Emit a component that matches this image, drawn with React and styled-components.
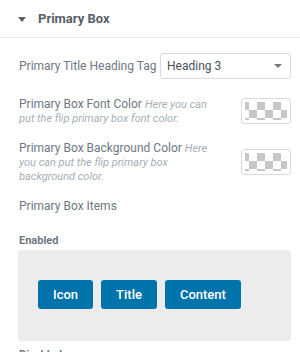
import React from "react"
import styled, { createGlobalStyle } from "styled-components"

const GlobalStyle = createGlobalStyle`
    body {
        margin: 0;
        background: #fff;
        font-family: Roboto, "Liberation Sans", Arial, sans-serif;
    }
`

const Panel = styled.div`
    width: 300px;
    height: 352px;
    overflow: hidden;
`

const SectionHeader = styled.div`
    height: 37px;
    display: flex;
    align-items: center;
    padding-left: 18px;
    border-bottom: 1px solid #e6e9ec;
`

const Caret = styled.span`
    width: 0;
    height: 0;
    border-left: 4px solid transparent;
    border-right: 4px solid transparent;
    border-top: 5px solid #556068;
    margin-right: 12px;
    margin-top: 1px;
`

const SectionTitle = styled.span`
    font-size: 13px;
    font-weight: 700;
    color: #556068;
`

const Body = styled.div`
    padding: 0 9px 0 18px;
`

const Row = styled.div`
    display: flex;
    align-items: center;
    justify-content: space-between;
    margin-top: ${p => p.$gap}px;
`

const Label = styled.div`
    font-size: 12px;
    line-height: 14px;
    color: #6d7882;
    padding-left: 1px;
    width: ${p => p.$width || "auto"};
`

const Hint = styled.i`
    font-size: 11px;
    line-height: 1;
    color: #a4afb7;
`

const Select = styled.div`
    box-sizing: border-box;
    width: 131px;
    height: 26px;
    border: 1px solid #d5dadf;
    border-radius: 3px;
    display: flex;
    align-items: center;
    justify-content: space-between;
    padding: 0 8px 0 6px;
    font-size: 12px;
    color: #495157;
`

const SelectArrow = styled.span`
    width: 0;
    height: 0;
    border-left: 4px solid transparent;
    border-right: 4px solid transparent;
    border-top: 4px solid #6d7882;
`

const Swatch = styled.div`
    box-sizing: border-box;
    width: 50px;
    height: 26px;
    border: 1px solid #d5dadf;
    border-radius: 3px;
    padding: 3px;
    flex-shrink: 0;
    &::after {
        content: "";
        display: block;
        width: 100%;
        height: 100%;
        background: conic-gradient(#c7c7c7 25%, #fff 0 50%, #c7c7c7 0 75%, #fff 0);
        background-size: 16px 16px;
        background-position: 4px 0;
    }
`

const GroupTitle = styled.div`
    font-size: 11px;
    font-weight: 700;
    line-height: 13px;
    color: #6d7882;
    padding-left: 1px;
    margin-top: ${p => p.$gap}px;
`

const Tray = styled.div`
    margin-top: 3px;
    background: #ececec;
    border-radius: 4px;
    padding: 30px 20px 32px;
    display: flex;
    gap: 8px;
`

const Item = styled.div`
    height: 29px;
    padding: 0 15px;
    display: flex;
    align-items: center;
    background: #0073aa;
    border-radius: 3px;
    color: #fff;
    font-size: 13px;
    font-weight: 500;
`

const App = () => {
    return (
        <Panel>
            <GlobalStyle/>
            <SectionHeader>
                <Caret/>
                <SectionTitle>Primary Box</SectionTitle>
            </SectionHeader>
            <Body>
                <Row $gap={15}>
                    <Label>Primary Title Heading Tag</Label>
                    <Select>
                        Heading 3
                        <SelectArrow/>
                    </Select>
                </Row>
                <Row $gap={18}>
                    <Label $width="195px">
                        Primary Box Font Color <Hint>Here you can put the flip primary box font color.</Hint>
                    </Label>
                    <Swatch/>
                </Row>
                <Row $gap={16}>
                    <Label $width="195px">
                        Primary Box Background Color <Hint>Here you can put the flip primary box background color.</Hint>
                    </Label>
                    <Swatch/>
                </Row>
                <Row $gap={16}>
                    <Label>Primary Box Items</Label>
                </Row>
                <GroupTitle $gap={21}>Enabled</GroupTitle>
                <Tray>
                    <Item>Icon</Item>
                    <Item>Title</Item>
                    <Item>Content</Item>
                </Tray>
                <GroupTitle $gap={7}>Disabled</GroupTitle>
            </Body>
        </Panel>
    )
}

export default App
